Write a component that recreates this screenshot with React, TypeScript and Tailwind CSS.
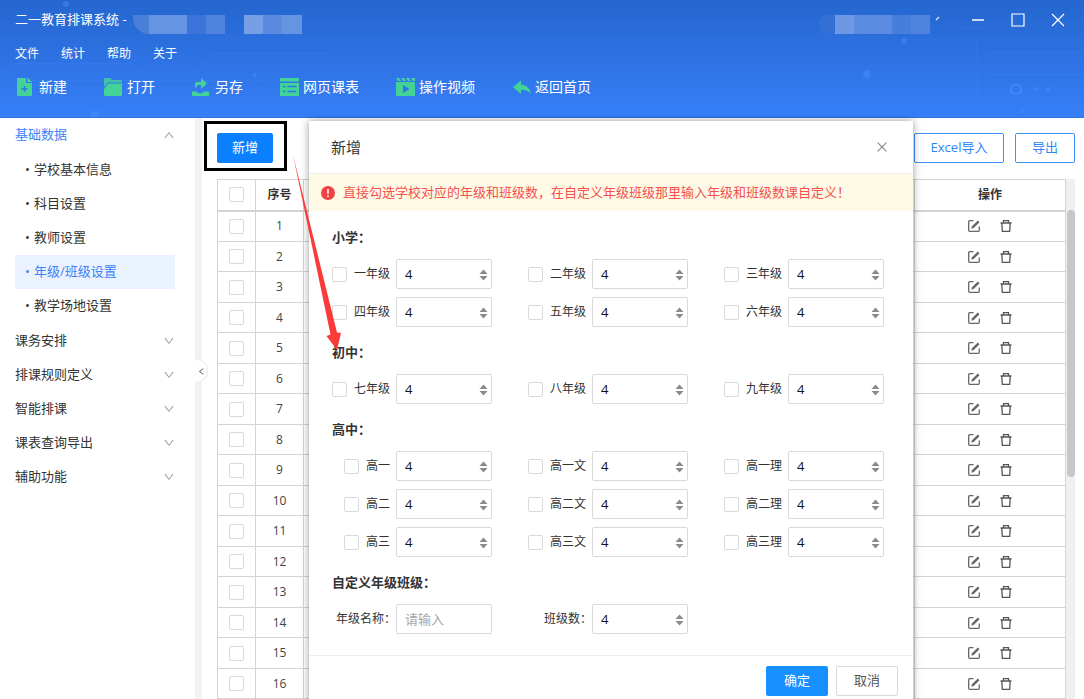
import type { ReactNode } from "react";
import { AiOutlineClose, AiOutlineDown, AiOutlineLeft, AiOutlineUp } from "react-icons/ai";

const menus = ["文件", "统计", "帮助", "关于"];

const subItems = ["学校基本信息", "科目设置", "教师设置", "年级/班级设置", "教学场地设置"];
const activeItem = "年级/班级设置";
const groups = ["课务安排", "排课规则定义", "智能排课", "课表查询导出", "辅助功能"];

const sections = [
  { title: "小学：", grades: ["一年级", "二年级", "三年级", "四年级", "五年级", "六年级"] },
  { title: "初中：", grades: ["七年级", "八年级", "九年级"] },
  {
    title: "高中：",
    grades: ["高一", "高一文", "高一理", "高二", "高二文", "高二理", "高三", "高三文", "高三理"],
  },
];

const rows = Array.from({ length: 16 }, (_, i) => i + 1);

const tools: { label: string; icon: ReactNode }[] = [
  {
    label: "新建",
    icon: (
      <>
        <path d="M1 1h9v5h6v12a1 1 0 0 1-1 1H2a1 1 0 0 1-1-1z" />
        <path d="M11.5 0.5 16 5h-4.5z" />
        <path d="M8.5 9v6M5.5 12h6" stroke="#2f74e8" strokeWidth="1.4" />
      </>
    ),
  },
  {
    label: "打开",
    icon: (
      <>
        <path d="M0 2a1 1 0 0 1 1-1h5l2 2h9a1 1 0 0 1 1 1v1.500H4L0 10z" opacity="0.8" />
        <path d="M4 6.500H18V17.500a1.500 1.500 0 0 1-1.500 1.500h-15A1.500 1.500 0 0 1 0 17.500V12z" />
      </>
    ),
  },
  {
    label: "另存",
    icon: (
      <>
        <path d="M0 14.500h4.500c1 2.500 6.500 2.500 7.500 0h5V19H0z" />
        <path d="M3 11V7Q3 5 5 5h4V1l6 5.500L9 12V8H6z" />
      </>
    ),
  },
  {
    label: "网页课表",
    icon: (
      <>
        <path d="M0 1h19v3.500H0zM0 6h19v13H0z" />
        <path
          d="M3 9.500h2.500M7.500 9.500h9M3 14.500h2.500M7.500 14.500h9"
          stroke="#2f74e8"
          strokeWidth="1.5"
        />
      </>
    ),
  },
  {
    label: "操作视频",
    icon: (
      <>
        <path d="M0 5h19v14H0z" />
        <path d="M0 1h3l2 3H2zM5 1h3l2 3H7zM10 1h3l2 3h-3zM15 1h4v3h-2z" />
        <path d="M7 8v8l6.500-4z" fill="#2f74e8" />
      </>
    ),
  },
  {
    label: "返回首页",
    icon: <path d="M9 3.500v4.200c5.500 0.300 9 3.300 10 9.300-2.500-3.200-5.500-4.200-10-4.200V17L1 10.300z" />,
  },
];

function Circuit() {
  return (
    <svg
      aria-hidden
      className="pointer-events-none absolute inset-0 h-full w-full"
      viewBox="0 0 1084 118"
      preserveAspectRatio="none"
      fill="none"
      stroke="#4b93ff"
      strokeOpacity="0.2"
    >
      <path d="M0 75 18 64h112l14 10h50l18-20h116M20 81h250M144 74v40M222 80v34" />
      <path d="M850 38h14M905 40h72v70M960 29h30M1084 53h-95v22h95M1026 90h58" />
      <circle cx="1016" cy="90" r="5" strokeWidth="2" strokeOpacity="0.5" />
      <g fill="#4b93ff" stroke="none" fillOpacity="0.4">
        <circle cx="1036" cy="90" r="2" />
        <circle cx="1048" cy="90" r="2" />
        <circle cx="867" cy="75" r="4" />
        <circle cx="904" cy="41" r="3" />
        <circle cx="255" cy="76" r="2" />
        <circle cx="66" cy="4" r="3" />
        <circle cx="95" cy="116" r="4" />
        <circle cx="1022" cy="112" r="2" />
      </g>
    </svg>
  );
}

function Header() {
  return (
    <header className="relative h-[118px] shrink-0 border-b border-[#2f74dd] bg-linear-to-b from-[#2566ce] to-[#367ff9] text-white">
      <Circuit />
      <div className="relative flex h-10 items-center pl-[15px] pr-[18px]">
        <h1 className="text-[13px]">二一教育排课系统 -</h1>
        <div aria-hidden className="ml-[6px] mt-2 flex h-[19px]">
          <span className="w-4 rounded-bl-full bg-[#4a7fd8]" />
          <span className="w-[38px] bg-[#6494e2]" />
          <span className="w-[19px] bg-[#3a74da]" />
          <span className="w-[19px] bg-[#5083de]" />
          <span className="w-[19px]" />
          <span className="w-[19px] bg-[#789fe6]" />
          <span className="w-[19px] bg-[#5b8be0]" />
          <span className="w-5 bg-[#6594e2]" />
        </div>
        <div aria-hidden className="ml-auto mt-2 flex h-[19px]">
          <span className="w-4 rounded-l-full bg-[#3370d6]" />
          <span className="w-[19px] bg-[#6d98e4]" />
          <span className="w-[38px] bg-[#5c8ce1]" />
          <span className="w-[19px] bg-[#477edb]" />
          <span className="w-[19px] bg-[#4f83de]" />
          <svg className="ml-1 h-2 w-2" viewBox="0 0 8 8" fill="none" stroke="#cfe0fb">
            <path d="M2 5 5 2" strokeWidth="1.5" />
          </svg>
        </div>
        <div className="ml-7 flex gap-6">
          <button type="button" aria-label="最小化">
            <svg className="h-4 w-4" viewBox="0 0 16 16" stroke="#fff" strokeWidth="1.5">
              <path d="M2 8h12" />
            </svg>
          </button>
          <button type="button" aria-label="最大化">
            <svg className="h-4 w-4" viewBox="0 0 16 16" fill="none" stroke="#fff" strokeWidth="1.2">
              <path d="M2 2h12v12H2z" />
            </svg>
          </button>
          <button type="button" aria-label="关闭">
            <svg className="h-4 w-4" viewBox="0 0 16 16" stroke="#fff" strokeWidth="1.2">
              <path d="m2 2 12 12M14 2 2 14" />
            </svg>
          </button>
        </div>
      </div>
      <nav className="relative flex h-7 items-center gap-[22px] pl-[15px] text-xs">
        {menus.map((m) => (
          <button key={m} type="button">
            {m}
          </button>
        ))}
      </nav>
      <div className="relative flex h-[38px] items-center gap-[37px] pl-4 text-sm">
        {tools.map((t) => (
          <button key={t.label} type="button" className="flex items-center gap-[3px]">
            <svg className="h-5 w-5" viewBox="0 0 20 20" fill="#43d397">
              {t.icon}
            </svg>
            {t.label}
          </button>
        ))}
      </div>
    </header>
  );
}

function Sidebar() {
  return (
    <aside className="w-[195px] shrink-0 pl-[15px] pr-5 text-[13px] text-[#333]">
      <button type="button" className="flex h-[34px] w-full items-center justify-between text-[#3d82f7]">
        基础数据
        <AiOutlineUp className="h-3 w-3 text-[#999]" />
      </button>
      <ul className="pb-px pt-px">
        {subItems.map((item) => (
          <li key={item}>
            <a
              href="#"
              className={
                item === activeItem
                  ? "flex h-[34px] items-center gap-1 bg-[#e9f2fe] pl-[10px] text-[#3d82f7]"
                  : "flex h-[34px] items-center gap-1 pl-[10px]"
              }
            >
              <span className="w-[5px] text-center">•</span>
              {item}
            </a>
          </li>
        ))}
      </ul>
      {groups.map((g) => (
        <button key={g} type="button" className="flex h-[34px] w-full items-center justify-between">
          {g}
          <AiOutlineDown className="h-3 w-3 text-[#999]" />
        </button>
      ))}
    </aside>
  );
}

function Checkbox({ label, id }: { label?: string; id?: string }) {
  return (
    <input
      id={id}
      type="checkbox"
      aria-label={label}
      className="block h-[15px] w-[15px] shrink-0 appearance-none rounded-xs border border-[#d9d9d9] bg-white checked:bg-[#1890ff]"
    />
  );
}

function NumberInput({ id, label }: { id?: string; label?: string }) {
  return (
    <div className="relative w-24 shrink-0">
      <input
        id={id}
        aria-label={label}
        type="number"
        defaultValue={4}
        className="block h-[30px] w-full rounded-xs border border-[#d9d9d9] pl-2 text-[13px] text-[#111] [appearance:textfield] [&::-webkit-inner-spin-button]:appearance-none"
      />
      <svg aria-hidden className="absolute right-1 top-[10px] h-3 w-[9px]" viewBox="0 0 9 12" fill="#8a8a8a">
        <path d="M4.500 0.500 8.500 5h-8zM4.500 11.500 8.500 7h-8z" />
      </svg>
    </div>
  );
}

function EditIcon() {
  return (
    <svg className="h-[14px] w-[14px]" viewBox="0 0 14 14" fill="none" stroke="#666" strokeWidth="1.3">
      <path d="M6.500 1.700H2.700a1 1 0 0 0-1 1v8.600a1 1 0 0 0 1 1h8.600a1 1 0 0 0 1-1V7.500" />
      <path d="M4.300 9.700 5 7.300 10.800 1.500l1.700 1.700L6.700 9z" fill="#666" stroke="none" />
    </svg>
  );
}

function TrashIcon() {
  return (
    <svg className="h-[14px] w-[14px]" viewBox="0 0 14 14" fill="none" stroke="#555" strokeWidth="1.3">
      <path d="M1.500 4h11M4.500 4V1.700h5V4M2.800 4l0.500 8.300h7.400L11.200 4" />
    </svg>
  );
}

function GradeTable() {
  return (
    <div className="flex">
      <table className="min-w-0 flex-1 table-fixed border-collapse text-center text-xs text-[#444]">
        <colgroup>
          <col className="w-[38px]" />
          <col className="w-12" />
          <col />
          <col className="w-[151px]" />
        </colgroup>
        <thead>
          <tr className="h-[31px] font-bold text-[#333]">
            <th className="border border-b-2 border-[#d4d4d4] p-0">
              <div className="flex justify-center">
                <Checkbox label="全选" />
              </div>
            </th>
            <th className="border border-b-2 border-[#d4d4d4] p-0">序号</th>
            <th className="border border-b-2 border-[#d4d4d4] p-0" />
            <th className="border border-b-2 border-[#d4d4d4] p-0">操作</th>
          </tr>
        </thead>
        <tbody>
          {rows.map((n) => (
            <tr key={n} className="odd:h-[31px] even:h-[30px]">
              <td className="border border-[#d4d4d4] p-0">
                <div className="flex justify-center">
                  <Checkbox label={`选择 ${n}`} />
                </div>
              </td>
              <td className="border border-[#d4d4d4] p-0">{n}</td>
              <td className="border border-[#d4d4d4] p-0" />
              <td className="border border-[#d4d4d4] p-0">
                <div className="flex justify-center gap-[18px]">
                  <button type="button" aria-label="编辑">
                    <EditIcon />
                  </button>
                  <button type="button" aria-label="删除">
                    <TrashIcon />
                  </button>
                </div>
              </td>
            </tr>
          ))}
        </tbody>
      </table>
      <div aria-hidden className="w-[9px] bg-[#f0f0f0] pt-[31px]">
        <div className="ml-px h-[267px] rounded-sm bg-[#c4c7cc]" />
      </div>
    </div>
  );
}

function AddDialog() {
  return (
    <div
      role="dialog"
      aria-label="新增"
      className="absolute left-[114px] top-[3px] w-[604px] bg-white text-[#333] shadow-[0_0_8px_rgba(0,0,0,0.4)]"
    >
      <div className="flex h-[53px] items-center justify-between border-b border-[#eee] pl-[22px] pr-6">
        <h2 className="text-[15px]">新增</h2>
        <button type="button" aria-label="关闭" className="text-[#888]">
          <AiOutlineClose className="h-[14px] w-[14px]" />
        </button>
      </div>
      <p className="flex h-[37px] items-center gap-2 bg-[#fffae6] pl-3 text-[13px] text-[#f5504e]">
        <svg className="h-[14px] w-[14px] shrink-0" viewBox="0 0 14 14">
          <circle cx="7" cy="7" r="7" fill="#f04444" />
          <path d="M7 3v5M7 9.500v1.500" stroke="#fff" strokeWidth="1.5" />
        </svg>
        直接勾选学校对应的年级和班级数，在自定义年级班级那里输入年级和班级数课自定义！
      </p>
      <form className="pb-[21px] pl-[23px] pr-[29px] pt-4 text-xs">
        {sections.map((s) => (
          <fieldset key={s.title} className="mb-[15px]">
            <legend className="mb-3 h-5 text-[13px] font-bold leading-5">{s.title}</legend>
            <div className="grid grid-cols-3 gap-x-9 gap-y-2">
              {s.grades.map((g) => (
                <div key={g} className="flex items-center justify-end gap-[6px]">
                  <div className="flex items-center gap-[7px]">
                    <Checkbox id={g} />
                    <label htmlFor={g}>{g}</label>
                  </div>
                  <NumberInput label={`${g}班级数`} />
                </div>
              ))}
            </div>
          </fieldset>
        ))}
        <fieldset>
          <legend className="mb-3 h-5 text-[13px] font-bold leading-5">自定义年级班级：</legend>
          <div className="grid grid-cols-3 gap-x-9">
            <div className="flex items-center justify-end">
              <label htmlFor="grade-name" className="whitespace-nowrap">
                年级名称：
              </label>
              <input
                id="grade-name"
                type="text"
                placeholder="请输入"
                className="block h-[30px] w-24 shrink-0 rounded-xs border border-[#d9d9d9] pl-2 text-[13px] placeholder:text-[#a6a6a6]"
              />
            </div>
            <div className="flex items-center justify-end">
              <label htmlFor="class-count">班级数：</label>
              <NumberInput id="class-count" />
            </div>
          </div>
        </fieldset>
      </form>
      <div className="flex justify-end gap-2 border-t border-[#eee] py-[10px] pr-[15px] text-[13px]">
        <button type="button" className="h-[30px] w-[62px] rounded-xs bg-[#1890ff] text-white">
          确定
        </button>
        <button type="button" className="h-[30px] w-[62px] rounded-xs border border-[#d9d9d9] text-[#555]">
          取消
        </button>
      </div>
    </div>
  );
}

export default function App() {
  return (
    <div className="flex h-screen flex-col overflow-hidden bg-white font-['Open_Sans','Noto_Sans_CJK_SC',sans-serif]">
      <Header />
      <div className="flex min-h-0 flex-1">
        <Sidebar />
        <main className="relative flex min-w-0 flex-1">
          <div className="w-[7px] shrink-0 bg-[#f2f2f2]" />
          <button
            type="button"
            aria-label="收起"
            className="absolute left-0 top-[241px] flex h-6 w-[13px] items-center justify-center rounded-r-full border border-l-0 border-[#eaeaea] bg-white"
          >
            <AiOutlineLeft className="h-[9px] w-[9px] text-[#444]" />
          </button>
          <div className="min-w-0 flex-1 pl-[15px] pr-[9px] pt-[15px]">
            <div className="mb-4 flex gap-[11px] text-[13px]">
              <button type="button" className="mr-auto h-[30px] w-14 rounded-xs bg-[#0a80ff] text-white">
                新增
              </button>
              <button type="button" className="h-[30px] w-[90px] rounded-xs border border-[#3d91f7] text-[#2f86f6]">
                Excel导入
              </button>
              <button type="button" className="h-[30px] w-[60px] rounded-xs border border-[#3d91f7] text-[#2f86f6]">
                导出
              </button>
            </div>
            <GradeTable />
          </div>
          <AddDialog />
          <div aria-hidden className="pointer-events-none absolute left-[9px] top-[3px] h-[50px] w-[83px] border-3 border-black" />
          <svg
            aria-hidden
            className="pointer-events-none absolute left-[95px] top-[32px] h-[205px] w-[60px]"
            viewBox="290 150 60 205"
            fill="#fb3a3a"
          >
            <path d="M293 155 337 332.500 341 333 337 350 326.500 336 330.500 334.500z" />
          </svg>
        </main>
      </div>
    </div>
  );
}
